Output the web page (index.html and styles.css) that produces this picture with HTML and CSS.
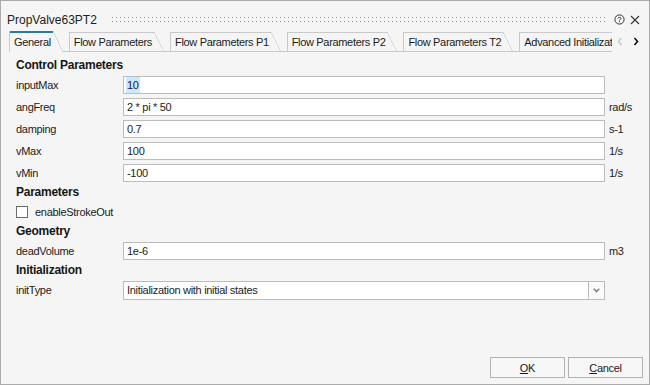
FILE: index.html
```html
<!DOCTYPE html>
<html lang="en">
<head>
    <meta charset="UTF-8">
    <title>PropValve63PT2</title>
    <link rel="stylesheet" href="styles.css">
</head>
<body>

<div class="window">
    <div class="titlebar">
        <span class="title">PropValve63PT2</span>
        <span class="grip"></span>
        <svg class="help" width="11" height="11" viewBox="0 0 11 11">
            <circle cx="5.5" cy="5.5" r="4.6" fill="none" stroke="#333" stroke-width="1"/>
            <path d="M3.9 4.3 C3.9 3.1 7.1 3.1 7.1 4.3 C7.1 5.3 5.5 5.3 5.5 6.4" fill="none" stroke="#333" stroke-width="1"/>
            <rect x="5" y="7.3" width="1" height="1" fill="#333"/>
        </svg>
        <svg class="close" width="10" height="10" viewBox="0 0 10 10">
            <path d="M1 1 L9 9 M9 1 L1 9" stroke="#333" stroke-width="1.1"/>
        </svg>
    </div>

    <div class="tabbar">
        <div class="tabs">
            <span class="tab active">General</span>
            <span class="tab">Flow Parameters</span>
            <span class="tab">Flow Parameters P1</span>
            <span class="tab">Flow Parameters P2</span>
            <span class="tab">Flow Parameters T2</span>
            <span class="tab">Advanced Initialization</span>
        </div>
        <div class="scroll">
            <svg width="6" height="9" viewBox="0 0 6 9"><path d="M4.5 1 L1.5 4.5 L4.5 8" fill="none" stroke="#c9c9c9" stroke-width="1.4"/></svg>
            <svg width="6" height="9" viewBox="0 0 6 9"><path d="M1.5 1 L4.5 4.5 L1.5 8" fill="none" stroke="#111" stroke-width="1.6"/></svg>
        </div>
    </div>

    <div class="content">
        <div class="group first">Control Parameters</div>
        <div class="row"><span class="label">inputMax</span><span class="field"><span class="selected">10</span></span><span class="unit"></span></div>
        <div class="row"><span class="label">angFreq</span><span class="field">2 * pi * 50</span><span class="unit">rad/s</span></div>
        <div class="row"><span class="label">damping</span><span class="field">0.7</span><span class="unit">s-1</span></div>
        <div class="row"><span class="label">vMax</span><span class="field">100</span><span class="unit">1/s</span></div>
        <div class="row"><span class="label">vMin</span><span class="field">-100</span><span class="unit">1/s</span></div>

        <div class="group">Parameters</div>
        <div class="check"><span class="box"></span><span>enableStrokeOut</span></div>

        <div class="group">Geometry</div>
        <div class="row"><span class="label">deadVolume</span><span class="field">1e-6</span><span class="unit">m3</span></div>

        <div class="group">Initialization</div>
        <div class="row"><span class="label">initType</span>
            <span class="select">
                <span class="field">Initialization with initial states</span>
                <span class="drop">
                    <svg width="7" height="5" viewBox="0 0 7 5"><path d="M0.8 0.8 L3.5 3.6 L6.2 0.8" fill="none" stroke="#808080" stroke-width="1.5"/></svg>
                </span>
            </span>
            <span class="unit"></span>
        </div>
    </div>

    <div class="footer">
        <button><u>O</u>K</button>
        <button><u>C</u>ancel</button>
    </div>
</div>

</body>
</html>
```

FILE: styles.css
```css
body {
    margin: 0;
    font-family: "Liberation Sans", Arial, sans-serif;
}

.window {
    width: 650px;
    height: 385px;
    box-sizing: border-box;
    border: 1px solid #ababab;
    background-color: #f5f5f5;
    color: #1b1b1b;
    font-size: 11px;
    letter-spacing: -0.3px;
    display: flex;
    flex-direction: column;
}

.titlebar {
    height: 30px;
    box-sizing: border-box;
    padding: 7px 9px 0 6px;
    display: flex;
    align-items: center;
}

.title {
    font-size: 12px;
    letter-spacing: 0;
    color: #222;
}

.grip {
    flex: 1;
    height: 7px;
    margin: 0 6px 0 15px;
    background-image:
        linear-gradient(to right, #8e8e8e 1px, transparent 1px),
        linear-gradient(to right, #8e8e8e 1px, transparent 1px);
    background-size: 4px 1px, 4px 1px;
    background-position: 0 1px, 0 5px;
    background-repeat: repeat-x;
}

.help {
    margin-right: 5px;
}

.tabbar {
    height: 21px;
    padding-left: 8px;
    display: flex;
}

.tabs {
    width: 603px;
    display: flex;
    align-items: flex-end;
    gap: 6px;
    overflow: hidden;
    white-space: nowrap;
    letter-spacing: -0.33px;
    background: linear-gradient(#c9c9c9, #c9c9c9) left bottom / 100% 1px no-repeat;
}

.tab {
    position: relative;
    flex-shrink: 0;
    height: 20px;
    box-sizing: border-box;
    padding: 0 12px 1px 4px;
    border-left: 1px solid #c9c9c9;
    display: flex;
    align-items: center;
    background: linear-gradient(#c9c9c9, #c9c9c9) left top / calc(100% - 10px) 1px no-repeat;
}

.tab::after {
    content: "";
    position: absolute;
    right: 0;
    top: 0;
    width: 10px;
    height: 100%;
    background: linear-gradient(to top right, transparent calc(50% - 0.6px), #c9c9c9 50%, transparent calc(50% + 0.6px));
}

.tab.active {
    height: 21px;
    padding-bottom: 0;
    background:
        linear-gradient(#2878b4, #2878b4) left top / calc(100% - 10px) 2px no-repeat,
        #f5f5f5;
}

.scroll {
    flex: 1;
    display: flex;
    align-items: center;
    gap: 10px;
    padding: 0 0 1px 5px;
}

.content {
    padding: 5px 0 0 15px;
}

.group {
    font-weight: bold;
    font-size: 12px;
    letter-spacing: -0.25px;
    line-height: 17px;
    color: #151515;
}

.row {
    height: 22px;
    display: grid;
    grid-template-columns: 107px 482px auto;
    align-items: center;
}

.field {
    height: 18px;
    box-sizing: border-box;
    border: 1px solid #bcbcbc;
    background-color: white;
    padding-left: 3px;
    display: flex;
    align-items: center;
}

.selected {
    background-color: #cce8ff;
    line-height: 16px;
    padding: 0 1px;
    margin-left: -1px;
}

.unit {
    padding-left: 4px;
}

.check {
    height: 22px;
    display: flex;
    align-items: center;
    gap: 7px;
}

.box {
    width: 12px;
    height: 12px;
    box-sizing: border-box;
    border: 1px solid #6a6a6a;
    background-color: white;
}

.select {
    display: flex;
    height: 19px;
}

.select .field {
    flex: 1;
    height: 19px;
}

.drop {
    width: 16px;
    box-sizing: border-box;
    border: 1px solid #bcbcbc;
    border-left: none;
    background-color: #fafafa;
    display: flex;
    align-items: center;
    justify-content: center;
}

.footer {
    margin-top: auto;
    padding: 0 6px 6px 0;
    display: flex;
    justify-content: flex-end;
    gap: 3px;
}

.footer button {
    width: 75px;
    height: 21px;
    padding: 0;
    border: 1px solid #b3b3b3;
    background-color: #f7f7f7;
    font: inherit;
    letter-spacing: inherit;
    color: inherit;
}
```
